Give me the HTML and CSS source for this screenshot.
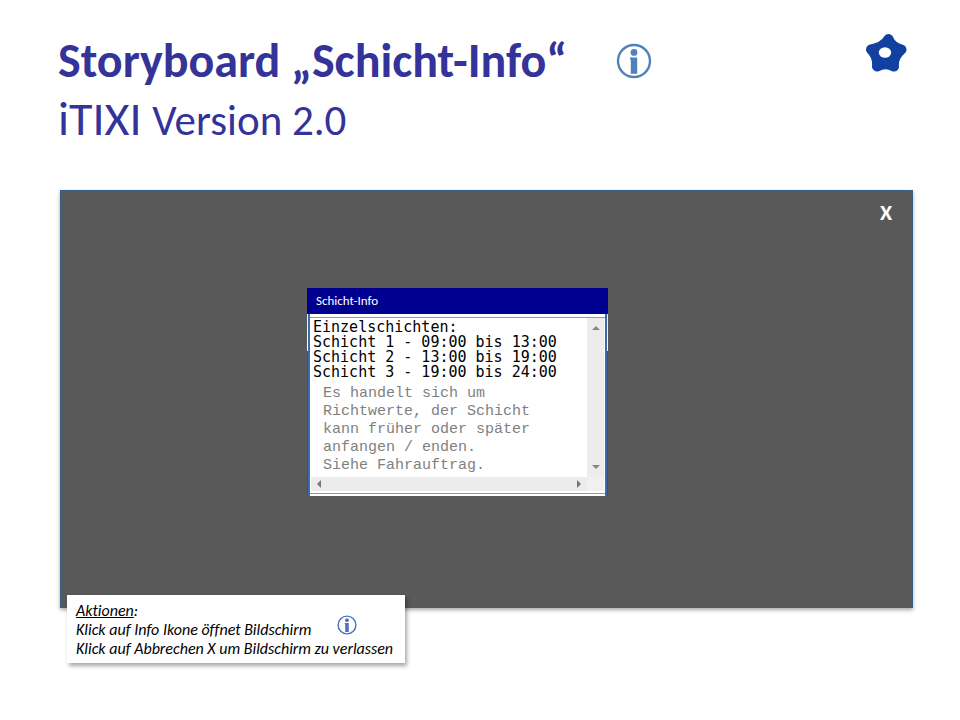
FILE: index.html
```html
<!DOCTYPE html>
<html lang="de">
<head>
    <meta charset="UTF-8">
    <meta name="viewport" content="width=device-width, initial-scale=1.0">
    <title>Storyboard Schicht-Info</title>
    <link rel="stylesheet" href="styles.css">
</head>
<body>
    <header class="header">
        <div class="title">
            <h1>Storyboard „Schicht-Info“</h1>
            <p class="version">iTIXI <span>Version 2.0</span></p>
        </div>
        <button class="info" type="button" aria-label="Info">
            <svg viewBox="0 0 36 36">
                <circle cx="18" cy="18" r="16" fill="none" stroke="currentColor" stroke-width="2.4"/>
                <circle cx="18" cy="9.4" r="3.4" fill="currentColor"/>
                <path d="M14 14.5h7.2v16.3h-6.400V16.500H14z" fill="currentColor"/>
            </svg>
        </button>
        <svg class="logo" viewBox="0 0 42 40" aria-hidden="true">
            <path fill="#1240a0" stroke="#1240a0" stroke-width="10" stroke-linejoin="round" d="M23.500 6Q26.500 14 36.500 16.500Q28 24 29 33.500Q20.500 29 12 33.500Q13 23.500 6 16.500Q19 14 23.500 6Z"/>
            <ellipse cx="20" cy="19.500" rx="6.200" ry="5.200" fill="#fff"/>
        </svg>
    </header>

    <main class="screen">
        <button class="close" type="button" aria-label="Abbrechen">X</button>
        <section class="window">
            <h2><label for="shifts">Schicht-Info</label></h2>
            <div class="frame">
                <div class="content">
                    <textarea id="shifts" rows="4" readonly>Einzelschichten:
Schicht 1 - 09:00 bis 13:00
Schicht 2 - 13:00 bis 19:00
Schicht 3 - 19:00 bis 24:00</textarea>
                    <p class="note">Es handelt sich um<br>Richtwerte, der Schicht<br>kann früher oder später<br>anfangen / enden.<br>Siehe Fahrauftrag.</p>
                </div>
                <div class="scroll vertical">
                    <i class="arrow up"></i>
                    <i class="arrow down"></i>
                </div>
                <div class="scroll horizontal">
                    <i class="arrow left"></i>
                    <i class="arrow right"></i>
                </div>
                <div class="corner"></div>
            </div>
        </section>
    </main>

    <aside class="actions">
        <p><u>Aktionen</u>:</p>
        <p class="with-icon">Klick auf Info Ikone öffnet Bildschirm
            <svg viewBox="0 0 36 36" aria-hidden="true">
                <circle cx="18" cy="18" r="16" fill="none" stroke="currentColor" stroke-width="2.6"/>
                <circle cx="18" cy="9.4" r="3.4" fill="currentColor"/>
                <path d="M14 14.5h7.2v16.3h-6.400V16.500H14z" fill="currentColor"/>
            </svg>
        </p>
        <p>Klick auf Abbrechen X um Bildschirm zu verlassen</p>
    </aside>
</body>
</html>
```
FILE: styles.css
```css
body {
    margin: 0;
    padding: 32px 47px 32px 60px;
    background-color: #fff;
    font-family: Carlito, 'Lato', sans-serif;
    font-variant-ligatures: none;
    color: #000;
}
h1, h2, p {
    margin: 0;
    font-weight: normal;
}
button {
    padding: 0;
    border: 0;
    background: none;
    font-family: inherit;
    cursor: pointer;
}
svg {
    display: block;
}
.header {
    display: flex;
    align-items: flex-start;
    color: #333399;
}
.title {
    margin-left: -2px;
    white-space: nowrap;
}
.title h1 {
    font-size: 48px;
    line-height: 58px;
    font-weight: bold;
}
.version {
    font-size: 48px;
    line-height: 58px;
}
.version span {
    font-size: 43px;
}
.info {
    margin: 11px 0 0 49px;
    color: #4f81bd;
}
.info svg {
    width: 36px;
    height: 36px;
}
.logo {
    width: 42px;
    height: 40px;
    margin: 1px 6px 0 auto;
}
.screen {
    display: flex;
    flex-direction: column;
    align-items: flex-start;
    margin-top: 40px;
    padding-bottom: 111px;
    border: 1px solid #385d8a;
    background-color: #595959;
    box-shadow: 0 2px 4px rgba(0, 0, 0, 0.35);
}
.close {
    align-self: flex-end;
    margin: 8px 20px 0 0;
    font-size: 22px;
    line-height: 28px;
    font-weight: bold;
    color: #fff;
}

/* Fenster */
.window {
    width: 301px;
    margin: 61px 0 0 246px;
    background: linear-gradient(#e4ecf5, #fff) 0 26px / 100% 37px no-repeat, #35527c;
}
.window h2 {
    padding: 0 9px;
    background-color: #000090;
    color: #fff;
    font-size: 13px;
    line-height: 26px;
}
.frame {
    display: grid;
    grid-template-columns: 1fr 17px;
    grid-template-rows: 160px 14px;
    margin: 0 1px;
    padding: 3px 1px 5px;
    border: solid #3a6cb0;
    border-width: 0 2px;
    background: linear-gradient(#7f9db9, #7f9db9) 0 3px / 100% 1px no-repeat,
                linear-gradient(#8aa0a8, #8aa0a8) 0 179px / 100% 1px no-repeat,
                #fff;
}
.content {
    overflow: hidden;
}
.content textarea {
    display: block;
    box-sizing: border-box;
    width: 100%;
    margin: 0;
    padding: 3px 0 0 2px;
    border: 0;
    outline: 0;
    overflow: hidden;
    resize: none;
    background: none;
    font: 15px/15px 'DejaVu Sans Mono', monospace;
    color: #000;
    white-space: pre;
}
.note {
    padding: 5px 0 0 12px;
    font: 15px/18px 'Liberation Mono', monospace;
    color: #7f7f7f;
}
.scroll {
    display: flex;
    align-items: center;
    justify-content: space-between;
    background-color: #ececec;
}
.vertical {
    flex-direction: column;
    padding: 8px 0;
    margin-top: 1px;
}
.horizontal {
    padding: 0 6px;
}
.corner {
    background-color: #f0f0f0;
}
.arrow {
    border: 4px solid transparent;
}
.up {
    border-top: 0;
    border-bottom-color: #888;
}
.down {
    border-bottom: 0;
    border-top-color: #888;
}
.left {
    border-left: 0;
    border-right-color: #777;
}
.right {
    border-right: 0;
    border-left-color: #777;
}

/* Aktionen */
.actions {
    position: relative;
    width: fit-content;
    margin: -13px 0 0 7px;
    padding: 6px 12px 5px 9px;
    background-color: #fff;
    box-shadow: 2px 3px 4px rgba(0, 0, 0, 0.35);
    font-size: 16px;
    line-height: 19px;
    font-style: italic;
    white-space: nowrap;
}
.with-icon {
    display: flex;
    gap: 26px;
}
.with-icon svg {
    width: 20px;
    height: 20px;
    margin: -5px 0 -1px;
    color: #4f71bd;
}
```
